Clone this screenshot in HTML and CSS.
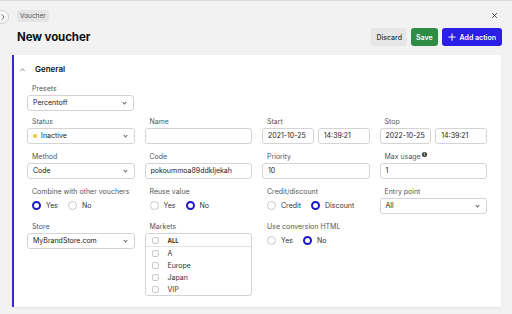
FILE: index.html
```html
<!DOCTYPE html>
<html lang="en">
<head>
<meta charset="utf-8">
<title>New voucher</title>
<link rel="stylesheet" href="styles.css">
</head>
<body>
<div class="app">
  <button class="side-toggle" aria-label="Expand">
    <svg viewBox="0 0 10 10" width="8" height="8"><path d="M3.5 2 L6.5 5 L3.5 8" fill="none" stroke="#555" stroke-width="1.1" stroke-linecap="round" stroke-linejoin="round"/></svg>
  </button>
  <header class="top">
    <div class="top-row">
      <span class="tag">Voucher</span>
      <button class="close" aria-label="Close">
        <svg viewBox="0 0 10 10" width="7" height="7"><path d="M2 2 L8 8 M8 2 L2 8" stroke="#333" stroke-width="1.2" stroke-linecap="round"/></svg>
      </button>
    </div>
    <div class="title-row">
      <h1>New voucher</h1>
      <div class="actions">
        <button class="btn discard">Discard</button>
        <button class="btn save">Save</button>
        <button class="btn primary">
          <svg viewBox="0 0 10 10" width="8" height="8"><path d="M5 1 V9 M1 5 H9" stroke="#fff" stroke-width="1.3" stroke-linecap="round"/></svg>
          Add action
        </button>
      </div>
    </div>
  </header>

  <section class="card">
    <div class="card-head">
      <svg class="chev-up" viewBox="0 0 10 10" width="7" height="7"><path d="M2.5 6.5 L5 4 L7.5 6.5" fill="none" stroke="#444" stroke-width="1" stroke-linecap="round" stroke-linejoin="round"/></svg>
      <span>General</span>
    </div>

    <div class="field presets">
      <label>Presets</label>
      <div class="control select">Percentoff<span class="caret"></span></div>
    </div>

    <div class="grid">
      <div class="field">
        <label>Status</label>
        <div class="control select"><span class="dot"></span>Inactive<span class="caret"></span></div>
      </div>
      <div class="field">
        <label>Name</label>
        <div class="control"></div>
      </div>
      <div class="field">
        <label>Start</label>
        <div class="pair">
          <div class="control">2021-10-25</div>
          <div class="control">14:39:21</div>
        </div>
      </div>
      <div class="field">
        <label>Stop</label>
        <div class="pair">
          <div class="control">2022-10-25</div>
          <div class="control">14:39:21</div>
        </div>
      </div>

      <div class="field">
        <label>Method</label>
        <div class="control select">Code<span class="caret"></span></div>
      </div>
      <div class="field">
        <label>Code</label>
        <div class="control">pokoummoa89ddkljekah</div>
      </div>
      <div class="field">
        <label>Priority</label>
        <div class="control">10</div>
      </div>
      <div class="field">
        <label>Max usage<span class="info">i</span></label>
        <div class="control">1</div>
      </div>

      <div class="field">
        <label>Combine with other vouchers</label>
        <div class="radios">
          <span class="radio on"></span><span class="rtext">Yes</span>
          <span class="radio"></span><span class="rtext">No</span>
        </div>
      </div>
      <div class="field">
        <label>Reuse value</label>
        <div class="radios">
          <span class="radio"></span><span class="rtext">Yes</span>
          <span class="radio on"></span><span class="rtext">No</span>
        </div>
      </div>
      <div class="field">
        <label>Credit/discount</label>
        <div class="radios">
          <span class="radio"></span><span class="rtext">Credit</span>
          <span class="radio on"></span><span class="rtext">Discount</span>
        </div>
      </div>
      <div class="field">
        <label>Entry point</label>
        <div class="control select">All<span class="caret"></span></div>
      </div>

      <div class="field">
        <label>Store</label>
        <div class="control select">MyBrandStore.com<span class="caret"></span></div>
      </div>
      <div class="field">
        <label>Markets</label>
        <div class="list">
          <div class="item all"><span class="check"></span>ALL</div>
          <div class="item"><span class="check"></span>A</div>
          <div class="item"><span class="check"></span>Europe</div>
          <div class="item"><span class="check"></span>Japan</div>
          <div class="item"><span class="check"></span>VIP</div>
        </div>
      </div>
      <div class="field">
        <label>Use conversion HTML</label>
        <div class="radios">
          <span class="radio"></span><span class="rtext">Yes</span>
          <span class="radio on"></span><span class="rtext">No</span>
        </div>
      </div>
    </div>
  </section>
</div>
</body>
</html>
```

FILE: styles.css
```css
* { box-sizing: border-box; }

html, body {
  margin: 0;
  padding: 0;
  background: #f2f2f2;
  font-family: Inter, "Noto Sans", "Liberation Sans", sans-serif;
  color: #222;
}

.app {
  position: relative;
  height: 314px;
  border-top: 1px solid #dcdcdc;
  overflow: hidden;
}

button {
  font-family: inherit;
  border: none;
  cursor: pointer;
}

.side-toggle {
  position: absolute;
  left: -5px;
  top: 9px;
  width: 14px;
  height: 14px;
  border-radius: 50%;
  background: #fafafa;
  border: 1px solid #cfcfcf;
  display: flex;
  align-items: center;
  justify-content: flex-end;
  padding: 0 1px 0 0;
}

.top {
  padding: 8px 10px 0 17px;
}

.top-row {
  display: flex;
  justify-content: space-between;
  align-items: center;
  height: 13px;
}

.tag {
  background: #e4e4e4;
  color: #555;
  font-size: 6.5px;
  line-height: 12px;
  padding: 0 3px;
  border-radius: 3px;
}

.close {
  background: none;
  padding: 0;
  margin-right: 4px;
  width: 8px;
  height: 8px;
  display: flex;
  align-items: center;
  justify-content: center;
}

.title-row {
  margin-top: 6px;
  display: flex;
  justify-content: space-between;
  align-items: center;
  height: 18px;
}

h1 {
  margin: 0;
  font-size: 11.5px;
  font-weight: 700;
  color: #111;
  letter-spacing: -0.1px;
}

.actions {
  display: flex;
  gap: 4px;
  height: 18px;
}

.btn {
  height: 18px;
  font-size: 7px;
  font-weight: 600;
  border-radius: 3px;
  padding: 0 5px;
  display: flex;
  align-items: center;
  gap: 4px;
}

.btn.discard {
  background: #e6e6e6;
  color: #333;
  font-weight: 500;
}

.btn.save {
  background: #2f8c45;
  color: #fff;
}

.btn.primary {
  background: #2b1ee6;
  color: #fff;
  padding: 0 6px;
}

.card {
  margin: 9px 11px 0 12px;
  background: #fff;
  border-left: 2px solid #3528d8;
  box-shadow: 0 1px 2px rgba(0,0,0,0.08);
  padding: 7px 14px 11px 13px;
}

.card-head {
  display: flex;
  align-items: center;
  height: 14px;
  font-size: 8px;
  font-weight: 600;
  color: #111;
  margin-left: -8px;
  gap: 9px;
}

.presets {
  width: 107px;
  margin-top: 7px;
  margin-bottom: 5px;
}

.grid {
  display: grid;
  grid-template-columns: repeat(4, 1fr);
  column-gap: 10px;
  row-gap: 7px;
  align-items: start;
}

.field label {
  display: block;
  font-size: 7px;
  line-height: 12px;
  color: #555;
  padding-left: 5px;
}

.control {
  position: relative;
  height: 16px;
  border: 1px solid #d4d4d4;
  border-radius: 3px;
  font-size: 7px;
  line-height: 14px;
  padding: 0 5px;
  color: #222;
  background: #fff;
  display: flex;
  align-items: center;
  white-space: nowrap;
}

.select .caret {
  position: absolute;
  right: 7px;
  top: 5px;
  width: 3px;
  height: 3px;
  border-right: 1px solid #666;
  border-bottom: 1px solid #666;
  transform: rotate(45deg);
}

.dot {
  width: 4px;
  height: 4px;
  border-radius: 50%;
  background: #f3c623;
  margin: 0 4px 0 0;
}

.pair {
  display: grid;
  grid-template-columns: 1fr 1fr;
  gap: 4px;
}

.info {
  display: inline-block;
  vertical-align: top;
  margin-left: 1px;
  margin-top: 1px;
  width: 5px;
  height: 5px;
  border-radius: 50%;
  background: #333;
  color: #fff;
  font-size: 4px;
  line-height: 5px;
  text-align: center;
  font-weight: 700;
}

.radios {
  display: flex;
  align-items: center;
  height: 15px;
  padding-left: 5px;
  font-size: 7px;
  color: #333;
}

.radio {
  width: 9px;
  height: 9px;
  border-radius: 50%;
  border: 1px solid #c8c8c8;
  background: #fff;
  margin-right: 5px;
}

.radio.on {
  border: 2.5px solid #1c1ac4;
}

.rtext {
  margin-right: 10px;
}

.list {
  border: 1px solid #d4d4d4;
  border-radius: 3px;
  font-size: 7px;
  color: #333;
}

.item {
  display: flex;
  align-items: center;
  height: 12px;
  padding-left: 6px;
  gap: 9px;
}

.item.all {
  height: 13px;
  font-weight: 700;
  font-size: 6px;
  border-bottom: 1px solid #e4e4e4;
}

.check {
  width: 7px;
  height: 7px;
  border: 1px solid #c8c8c8;
  border-radius: 2px;
}
```
